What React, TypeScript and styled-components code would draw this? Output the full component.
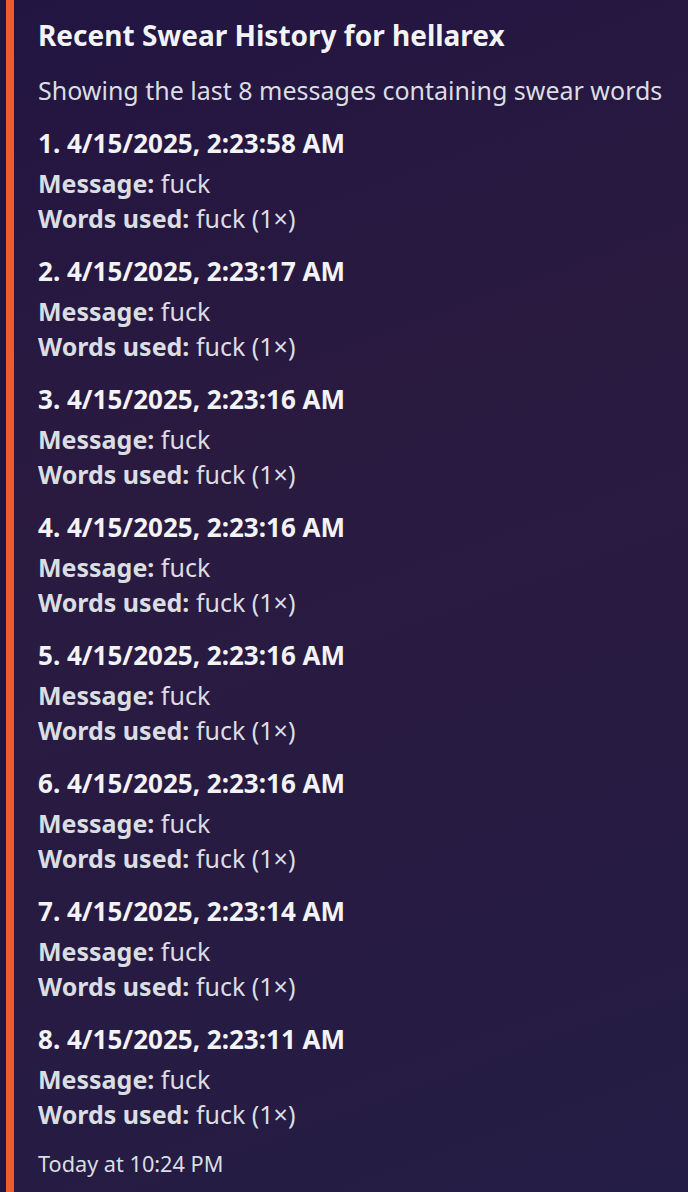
import React from "react";
import styled, { createGlobalStyle } from "styled-components";

const GlobalStyle = createGlobalStyle`
  html, body {
    margin: 0;
    padding: 0;
    background: #1f1544;
  }
  body {
    font-family: "Noto Sans", "Open Sans", sans-serif;
    -webkit-font-smoothing: antialiased;
  }
`;

const Page = styled.div`
  display: flex;
  min-height: 1192px;
  padding-left: 6px;
  box-sizing: border-box;
  background: #1f1544;
`;

const Embed = styled.article`
  flex: 1;
  display: flex;
  flex-direction: column;
  border-left: 8px solid #f15a2a;
  background: linear-gradient(160deg, #221542 0%, #2a1a40 35%, #271b42 70%, #241d45 100%);
  padding: 17px 16px 0 24px;
`;

const Title = styled.h1`
  margin: 0;
  font-size: 28px;
  line-height: 36px;
  font-weight: 700;
  color: #f2f3f5;
`;

const Description = styled.p`
  margin: 20px 0 0;
  font-size: 25px;
  line-height: 35px;
  color: #dbdee1;
`;

const EntryList = styled.div`
  display: flex;
  flex-direction: column;
  gap: 17px;
  margin-top: 17px;
`;

const Entry = styled.section`
  display: flex;
  flex-direction: column;
`;

const EntryHeader = styled.div`
  font-size: 26px;
  line-height: 36px;
  font-weight: 700;
  color: #f2f3f5;
  margin-bottom: 5px;
`;

const Line = styled.div`
  font-size: 25px;
  line-height: 35px;
  color: #dbdee1;
`;

const Label = styled.strong`
  font-weight: 700;
`;

const Footer = styled.footer`
  margin-top: 20px;
  font-size: 21.7px;
  line-height: 24px;
  color: #dbdee1;
`;

const entries = [
  "4/15/2025, 2:23:58 AM",
  "4/15/2025, 2:23:17 AM",
  "4/15/2025, 2:23:16 AM",
  "4/15/2025, 2:23:16 AM",
  "4/15/2025, 2:23:16 AM",
  "4/15/2025, 2:23:16 AM",
  "4/15/2025, 2:23:14 AM",
  "4/15/2025, 2:23:11 AM",
];

export default function App() {
  return (
    <>
      <GlobalStyle />
      <Page>
        <Embed>
          <Title>Recent Swear History for hellarex</Title>
          <Description>Showing the last 8 messages containing swear words</Description>
          <EntryList>
            {entries.map((t, i) => (
              <Entry key={i}>
                <EntryHeader>{i + 1}. {t}</EntryHeader>
                <Line>
                  <Label>Message:</Label> fuck
                </Line>
                <Line>
                  <Label>Words used:</Label> fuck (1×)
                </Line>
              </Entry>
            ))}
          </EntryList>
          <Footer>Today at 10:24 PM</Footer>
        </Embed>
      </Page>
    </>
  );
}
